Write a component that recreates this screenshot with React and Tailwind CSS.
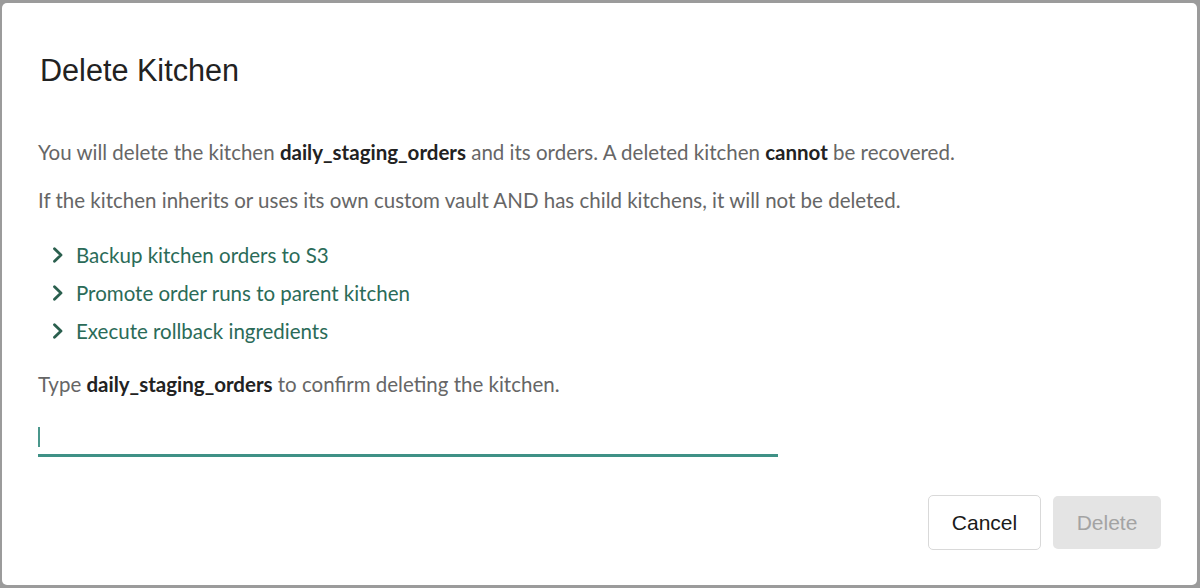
import React from 'react';

function Chevron() {
  return (
    <svg width="12" height="16" viewBox="0 0 12 16" className="shrink-0">
      <polyline points="2.5,1.8 9,8 2.5,14.2" fill="none" stroke="#2a5f4e" strokeWidth="2.8" strokeLinecap="round" strokeLinejoin="round" />
    </svg>
  );
}

const steps = [
  'Backup kitchen orders to S3',
  'Promote order runs to parent kitchen',
  'Execute rollback ingredients',
];

function App() {
  return (
    <div className="h-[588px] w-[1200px] bg-[#9b9b9b] pt-[3px] pb-[3px] pl-[2px] pr-[3px]">
      <div className="h-full bg-white rounded-[5px] pl-[36px] pr-[36px] pt-[49px] pb-[35px] flex flex-col font-['Lato',sans-serif]">
        <h2 className="font-['Liberation_Sans',Arial,sans-serif] text-[30.6px] leading-[36px] text-[#222] ml-[2px]">Delete Kitchen</h2>

        <p className="mt-[50px] text-[20.5px] leading-[28px] text-[#666]">
          You will delete the kitchen <b className="font-bold text-[#222]">daily_staging_orders</b> and its orders. A deleted kitchen <b className="font-bold text-[#222]">cannot</b> be recovered.
        </p>
        <p className="mt-[20px] text-[20.5px] leading-[28px] text-[#666]">
          If the kitchen inherits or uses its own custom vault AND has child kitchens, it will not be deleted.
        </p>

        <ul className="mt-[27px] ml-[14px] flex flex-col gap-[10px]">
          {steps.map((s) => (
            <li key={s} className="flex items-center gap-[12px] text-[20.5px] leading-[28px] text-[#2b6b58]">
              <Chevron />
              <span>{s}</span>
            </li>
          ))}
        </ul>

        <p className="mt-[25px] text-[20.5px] leading-[28px] text-[#666]">
          Type <b className="font-bold text-[#222]">daily_staging_orders</b> to confirm deleting the kitchen.
        </p>

        <div className="mt-[18px] w-[740px] h-[41px] border-b-[3px] border-[#3f9186] pt-[11px]">
          <div className="w-[2px] h-[20px] bg-[#4a978c]" />
        </div>

        <div className="mt-[38px] flex justify-end items-start gap-[12px]">
          <button className="h-[55px] w-[113px] rounded-[5px] border border-[#d9d9d9] bg-white font-['Liberation_Sans',Arial,sans-serif] text-[21px] text-[#1a1a1a]">
            Cancel
          </button>
          <button disabled className="mt-[1px] h-[53px] w-[108px] rounded-[5px] bg-[#e4e4e4] font-['Liberation_Sans',Arial,sans-serif] text-[21px] text-[#a3a3a3]">
            Delete
          </button>
        </div>
      </div>
    </div>
  );
}

export default App;
